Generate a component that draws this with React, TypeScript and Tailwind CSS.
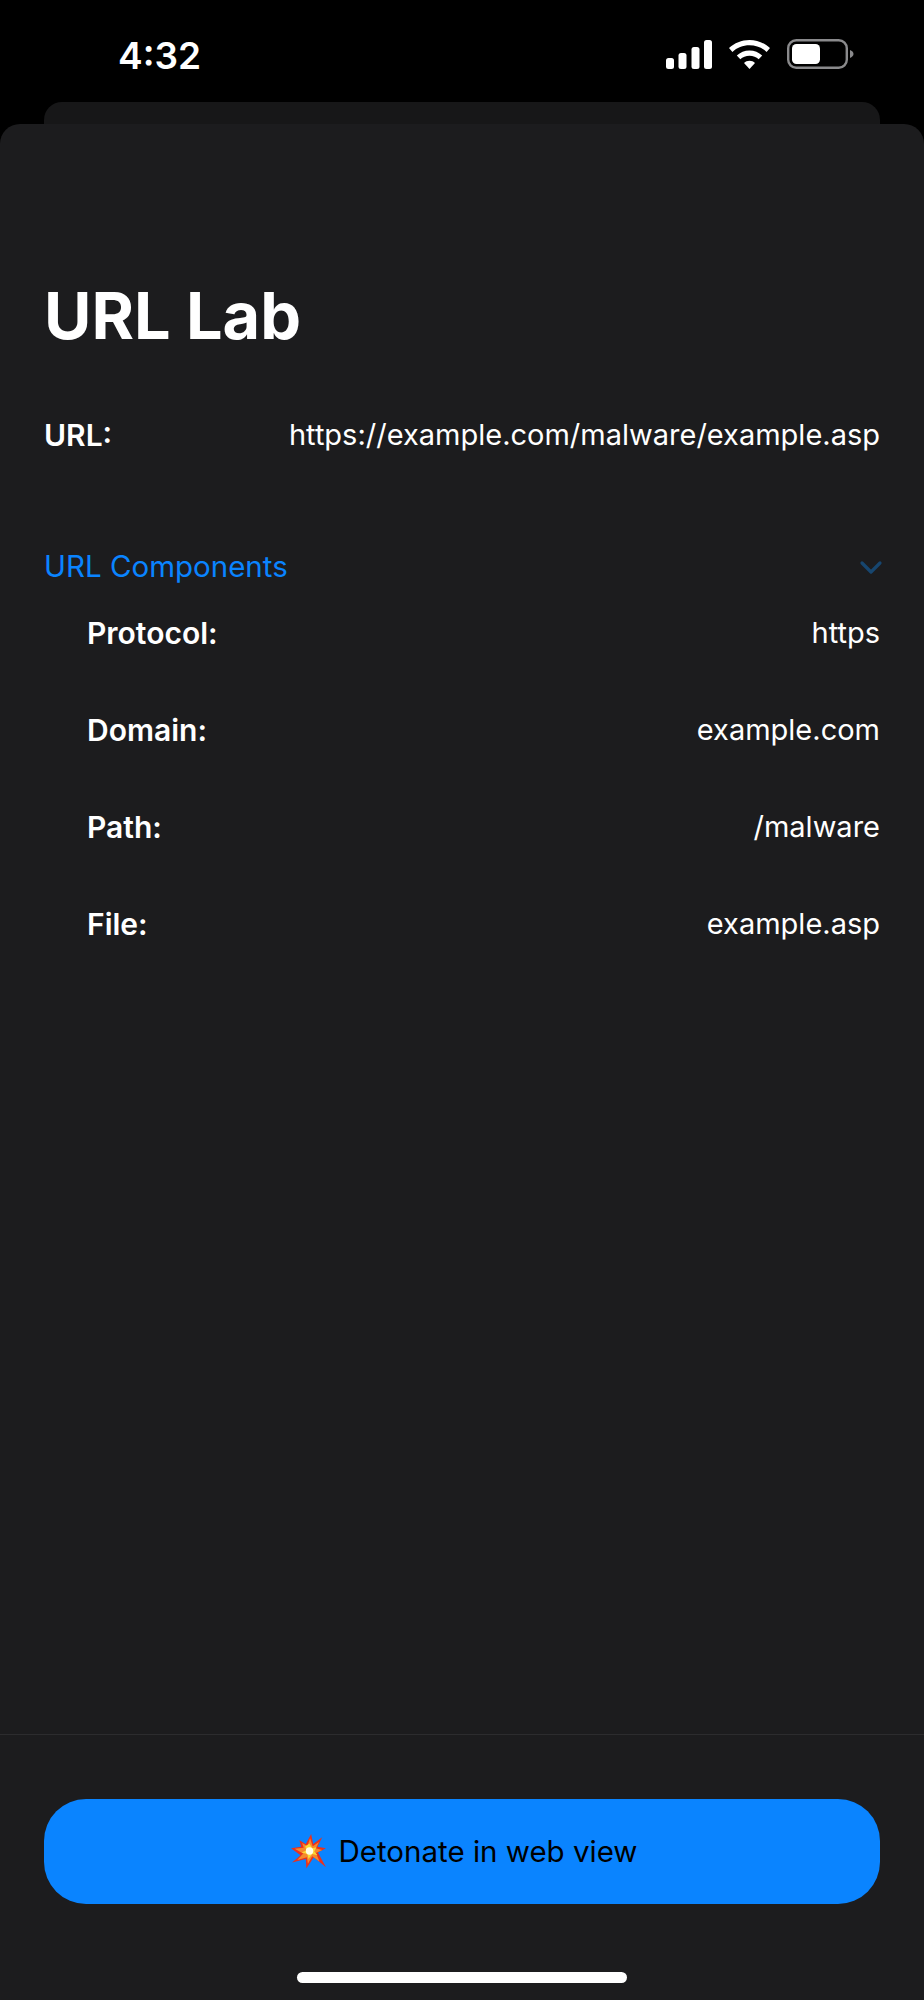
const FONT = "font-['Inter','Noto_Sans',sans-serif]";

const COMPONENTS = [
  { label: "Protocol:", value: "https" },
  { label: "Domain:", value: "example.com" },
  { label: "Path:", value: "/malware" },
  { label: "File:", value: "example.asp" },
];

function SignalIcon() {
  return (
    <svg width="46" height="29" viewBox="0 0 46 29" fill="#fff">
      <rect x="0" y="18" width="8" height="11" rx="2.5" />
      <rect x="12.5" y="13" width="8" height="16" rx="2.5" />
      <rect x="25.5" y="7" width="8" height="22" rx="2.5" />
      <rect x="38" y="0" width="8" height="29" rx="2.5" />
    </svg>
  );
}

function WifiIcon() {
  return (
    <svg width="41" height="29" viewBox="0 0 41 29" fill="#fff">
      <path d="M20.5 0C28.4 0 35.6 3.1 41 8.1L37.6 11.9C33.1 7.800 27.100 5.300 20.500 5.300C13.900 5.300 7.900 7.800 3.400 11.900L0 8.100C5.400 3.100 12.600 0 20.500 0Z" />
      <path d="M20.500 10.500C25.400 10.500 29.800 12.400 33.200 15.500L29.700 19.300C27.300 17.100 24.100 15.800 20.500 15.800C16.900 15.800 13.700 17.100 11.300 19.300L7.800 15.500C11.200 12.400 15.600 10.500 20.500 10.500Z" />
      <path d="M20.500 20.800C22.600 20.800 24.500 21.600 26 22.900L20.500 29L15 22.900C16.500 21.600 18.400 20.800 20.500 20.800Z" />
    </svg>
  );
}

function BatteryIcon() {
  return (
    <svg width="67" height="30" viewBox="0 0 67 30">
      <rect x="1.2" y="1.2" width="58.600" height="27.600" rx="8" fill="none" stroke="#8a8a8c" strokeWidth="2.400" />
      <rect x="5" y="5" width="28" height="20" rx="4.500" fill="#fff" />
      <path d="M63 11C65 11.800 66.500 13.200 66.500 15C66.500 16.800 65 18.200 63 19Z" fill="#8a8a8c" />
    </svg>
  );
}

function ExplosionIcon() {
  return (
    <svg width="36" height="36" viewBox="0 0 34 34">
      <path
        d="M19 0L21 9.500L29.500 3L25 12L33 13.500L25.500 17.500L33 31.500L21.500 22L14.500 32.500L14 23.500L1 27L9 20L0 13.500L9.500 12L8 6L14 9.500Z"
        fill="#e8321f"
      />
      <path d="M18 4L20.500 11.500L26.500 7.500L23.500 13.500L29.500 15L23.500 18L27 26L20 21L16 28L15 22L6 24.500L11.500 18.500L3.500 14L12 13L10.500 8.500L15.500 11.500Z" fill="#f58a2c" />
      <path d="M17.500 9L20 13.500L24 12.500L22 16.500L25 20L20 19L16.500 23.500L15.500 19L10 17.500L14.500 15.500L13.500 11.500Z" fill="#fdd835" />
      <circle cx="17.500" cy="16" r="3.500" fill="#fffde7" />
    </svg>
  );
}

function Row({ label, value, className }: { label: string; value: string; className: string }) {
  return (
    <div className={`flex items-center justify-between leading-[36px] text-white ${className}`}>
      <span className="text-[30px] font-semibold">{label}</span>
      <span className="text-[29px] font-normal">{value}</span>
    </div>
  );
}

export default function App() {
  return (
    <div className={`flex h-[2000px] w-[924px] flex-col bg-black ${FONT}`}>
      {/* Status bar */}
      <div className="flex h-[102px] items-start justify-between pl-[118px] pr-[70px]">
        <span className="mt-[34px] text-[37px] font-semibold leading-[44px] text-white">4:32</span>
        <div className="mt-[39px] flex items-center">
          <SignalIcon />
          <div className="ml-[17px]">
            <WifiIcon />
          </div>
          <div className="ml-[17px]">
            <BatteryIcon />
          </div>
        </div>
      </div>

      {/* Sheet stacked behind */}
      <div className="mx-[44px] h-[22px] shrink-0 rounded-t-[18px] bg-[#171718]" />

      {/* Sheet */}
      <div className="flex min-h-0 flex-1 flex-col rounded-t-[20px] bg-[#1c1c1e]">
        <div className="flex-1 px-[44px] pt-[153px]">
          <h1 className="text-[64.800px] font-bold leading-[78px] text-white">URL Lab</h1>

          <Row label="URL:" value="https://example.com/malware/example.asp" className="mt-[62px]" />

          <div className="mt-[95px] flex items-center justify-between text-[29.500px] leading-[36px] text-[#0a84ff]">
            <span>URL Components</span>
            <svg className="mr-[-3px] mt-[3px]" width="24" height="16" viewBox="0 0 24 16" fill="none" stroke="#17466f" strokeWidth="3.200" strokeLinecap="round" strokeLinejoin="round">
              <path d="M3 3L12 12L21 3" />
            </svg>
          </div>

          <div className="mt-[31px] flex flex-col gap-[61px] pl-[43px]">
            {COMPONENTS.map((c) => (
              <Row key={c.label} label={c.label} value={c.value} className="" />
            ))}
          </div>
        </div>

        {/* Footer */}
        <div className="h-[266px] shrink-0 border-t border-[#2c2c2e] px-[44px] pt-[64px]">
          <button
            type="button"
            className="flex h-[105px] w-full items-center justify-center gap-[12px] rounded-[42px] bg-[#0a84ff] pl-[4px] text-[29.500px] text-black"
          >
            <ExplosionIcon />
            <span>Detonate in web view</span>
          </button>
          <div className="mx-auto mt-[68px] h-[11px] w-[330px] rounded-full bg-white" />
        </div>
      </div>
    </div>
  );
}
